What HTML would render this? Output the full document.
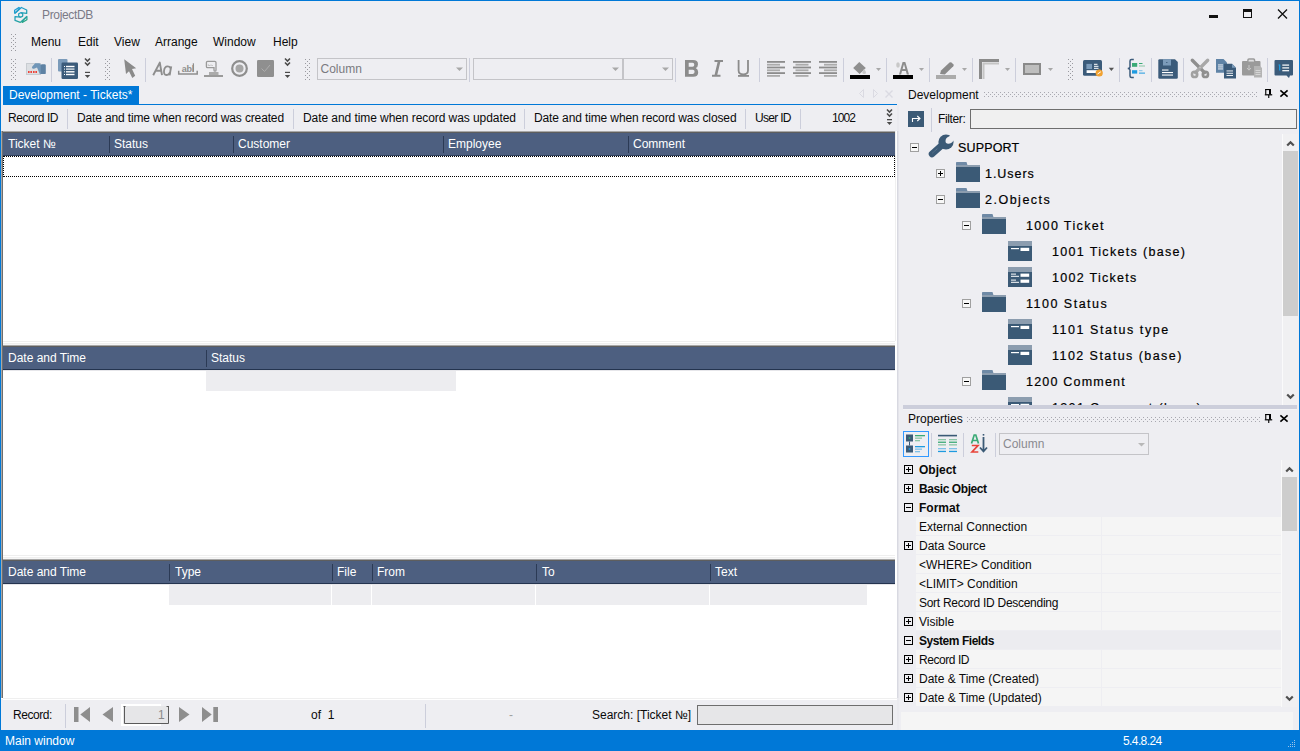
<!DOCTYPE html>
<html><head><meta charset="utf-8">
<style>
*{box-sizing:border-box;margin:0;padding:0}
html,body{width:1300px;height:751px;overflow:hidden;background:#EEEEF2;font-family:"Liberation Sans",sans-serif;font-size:12px;color:#0A0A0A}
.a{position:absolute}
.t{position:absolute;white-space:nowrap;line-height:14px}
.sep{position:absolute;width:1px;background:#CCCEDB}
.grip{position:absolute;width:5px;background-image:radial-gradient(circle,#A0A0A8 0.8px,transparent 1px);background-size:4px 4px}
.hdr{position:absolute;background:#4D5F80}
.hdr .t{color:#fff}
.hs{position:absolute;width:1px;background:#2B3A55}
.cell{position:absolute;background:#EDEDF0}
.pbox{position:absolute;width:9px;height:9px;border:1px solid #000;background:transparent}
.pbox:before{content:"";position:absolute;left:1px;top:3px;width:5px;height:1px;background:#000}
.pbox.plus:after{content:"";position:absolute;left:3px;top:1px;width:1px;height:5px;background:#000}
.tbox{position:absolute;width:9px;height:9px;border:1px solid #A0A0A0;background:#F5F5F5}
.tbox:before{content:"";position:absolute;left:1px;top:3px;width:5px;height:1px;background:#000}
.tbox.plus:after{content:"";position:absolute;left:3px;top:1px;width:1px;height:5px;background:#000}
.tree{position:absolute;white-space:nowrap;font-size:12.5px;line-height:14px;color:#000;-webkit-text-stroke:0.2px #000}
.prow{position:absolute;left:915px;width:367px;height:18px;background:#F5F5F5}
.prow2{position:absolute;left:1102px;width:180px;height:18px;background:#F5F5F5}
.arr{position:absolute;width:0;height:0;border-left:4px solid transparent;border-right:4px solid transparent;border-top:4px solid #A8A8A8}
</style></head><body>
<!-- window border -->
<div class="a" style="left:0;top:0;width:1300px;height:751px;border:1px solid #0078D7;"></div>

<!-- title bar -->
<!-- logo -->
<svg class="a" style="left:11px;top:4px" width="20" height="22" viewBox="11 4 20 22">
<defs><linearGradient id="lg" gradientUnits="userSpaceOnUse" x1="14" y1="7" x2="25" y2="24"><stop offset="0" stop-color="#1E9BE0"/><stop offset="0.5" stop-color="#22A0B8"/><stop offset="0.8" stop-color="#26A39A"/><stop offset="1" stop-color="#30A866"/></linearGradient></defs>
<g stroke="url(#lg)" stroke-width="1.25" fill="none" stroke-linejoin="round">
<path d="M14.6 13.2 V10.2 L18.9 7.4 L19.8 8.2 L14.8 13.2 Z"/>
<path d="M15 13.3 L21.4 7.5 L26.7 10 V13.4 L20.8 12.7"/>
<path d="M18.7 13.7 L20.7 12.7 L22.7 13.6 V16.1 L20.7 17.2 L18.7 16.2 Z"/>
<path d="M26.7 16.6 L20.3 22.4 L15 20.4 V16.6 L20.7 17.2"/>
<path d="M26.9 16.4 V19.8 L22.3 22.4 L21.7 21.8 Z"/>
</g></svg>

<div class="t" style="left:42px;top:8px;color:#7A7A86;font-size:12px;letter-spacing:-0.33px">ProjectDB</div>
<div class="a" style="left:1209px;top:15px;width:9px;height:3px;background:#111"></div>
<div class="a" style="left:1243px;top:9px;width:9px;height:9px;border:1px solid #111;border-top-width:3px"></div>
<svg class="a" style="left:1277px;top:9px" width="11" height="10" viewBox="0 0 11 10"><path d="M1 0.5L10 9.5M10 0.5L1 9.5" stroke="#111" stroke-width="1.3"/></svg>

<!-- menu bar -->
<div class="t" style="left:31px;top:35px">Menu</div>
<div class="t" style="left:78px;top:35px">Edit</div>
<div class="t" style="left:114px;top:35px">View</div>
<div class="t" style="left:155px;top:35px">Arrange</div>
<div class="t" style="left:213px;top:35px">Window</div>
<div class="t" style="left:273px;top:35px">Help</div>

<!-- toolbar placeholder -->
<svg class="a" style="left:0;top:0" width="1300" height="90" viewBox="0 0 1300 90" shape-rendering="auto">
<defs>
<pattern id="gp" x="0" y="0" width="4" height="4" patternUnits="userSpaceOnUse"><rect x="0" y="0" width="1" height="1" fill="#9A9AA0"/><rect x="2" y="2" width="1" height="1" fill="#9A9AA0"/></pattern>
<pattern id="dp" x="0" y="0" width="4" height="4" patternUnits="userSpaceOnUse"><rect x="0" y="0" width="1" height="1" fill="#A8A8B0"/><rect x="2" y="2" width="1" height="1" fill="#A8A8B0"/></pattern>
</defs>
<!-- grippers -->
<rect width="5" height="17" fill="url(#gp)" transform="translate(11,34)"/>
<rect width="5" height="21" fill="url(#gp)" transform="translate(11,59)"/>
<rect width="5" height="21" fill="url(#gp)" transform="translate(105,59)"/>
<rect width="5" height="21" fill="url(#gp)" transform="translate(305,59)"/>
<rect width="5" height="21" fill="url(#gp)" transform="translate(1068,59)"/>
<!-- separators -->
<g fill="#CCCEDB">
<rect x="51" y="58" width="1" height="24"/>
<rect x="145" y="58" width="1" height="24"/>
<rect x="469" y="58" width="1" height="24"/>
<rect x="675" y="58" width="1" height="24"/>
<rect x="759" y="58" width="1" height="24"/>
<rect x="843" y="58" width="1" height="24"/>
<rect x="886" y="58" width="1" height="24"/>
<rect x="929" y="58" width="1" height="24"/>
<rect x="972" y="58" width="1" height="24"/>
<rect x="1015" y="58" width="1" height="24"/>
<rect x="1119" y="58" width="1" height="24"/>
<rect x="1151" y="58" width="1" height="24"/>
<rect x="1183" y="58" width="1" height="24"/>
<rect x="1267" y="58" width="1" height="24"/>
</g>
<!-- icon: card with hand -->
<rect x="26.5" y="63.5" width="14" height="11" fill="#DCDFE3" stroke="#C8CCD1" stroke-width="1"/>
<g fill="#EE4238"><rect x="28" y="71" width="1.6" height="2"/><rect x="30.4" y="71" width="1.6" height="2"/><rect x="33" y="71" width="1.6" height="2"/><rect x="35.4" y="71" width="1.6" height="2"/></g>
<path d="M32.3 68.3 Q31.5 67.5 32.3 66.5 L35.2 63.2 H39.5 L41.5 65.5 V74 H39.8 L37 67.6 L34 68.8 Q33 69 32.3 68.3 Z" fill="#7096B8"/>
<rect x="40.8" y="64.3" width="5" height="9.8" rx="1.2" fill="#5E82A4"/>
<!-- icon: stacked docs -->
<rect x="58" y="59" width="9.5" height="12.5" rx="1" fill="#7B9BBA"/>
<rect x="61.5" y="62.5" width="16.5" height="16.5" rx="1.2" fill="#3B5B7A"/>
<g fill="#fff"><rect x="64" y="66" width="1" height="1"/><rect x="66" y="65.8" width="8.5" height="1.4"/>
<rect x="64" y="68.6" width="1" height="1"/><rect x="66" y="68.4" width="8.5" height="1.4" fill="#D8E0E8"/>
<rect x="64" y="71.3" width="1" height="1"/><rect x="66" y="71.1" width="8.5" height="1.4"/>
<rect x="64" y="74" width="1" height="1"/><rect x="66" y="73.8" width="8.5" height="1.4"/></g>
<!-- overflow chevrons -->
<g stroke="#4A4A4A" stroke-width="1.6" fill="none"><path d="M85 58.5 L87.5 61 L90 58.5"/><path d="M85 62.5 L87.5 65 L90 62.5"/></g>
<rect x="85" y="71.8" width="5" height="1.2" fill="#4A4A4A"/><path d="M84.8 75 L90.2 75 L87.5 78 Z" fill="#4A4A4A"/>
<g stroke="#4A4A4A" stroke-width="1.6" fill="none"><path d="M285 58.5 L287.5 61 L290 58.5"/><path d="M285 62.5 L287.5 65 L290 62.5"/></g>
<rect x="285" y="71.8" width="5" height="1.2" fill="#4A4A4A"/><path d="M284.8 75 L290.2 75 L287.5 78 Z" fill="#4A4A4A"/>
<!-- cursor -->
<path d="M124.2 59.2 L136.2 68.3 L132 68.9 L135.2 75.7 L132.3 78.1 L129 71.3 L126 73.9 Z" fill="#8A8A8A"/>
<!-- Aa -->
<path d="M153.2 75.2 L159.8 62.6 L162 75.2 M155.6 70.8 H161.2" stroke="#8E8E8E" stroke-width="1.9" fill="none" stroke-linejoin="round"/>
<path d="M171.2 66.3 L169.6 75.4" stroke="#8E8E8E" stroke-width="1.9" fill="none"/>
<path d="M170.6 68.2 Q169.5 66.3 167.6 66.3 Q164.4 66.3 164 71 Q163.8 75 166.3 75 Q168.6 75 170 72.3" stroke="#8E8E8E" stroke-width="1.8" fill="none"/>
<!-- abl -->
<text x="181.7" y="71.6" font-family="Liberation Sans" font-weight="bold" font-size="9" fill="#8E8E8E" letter-spacing="-0.2">abl</text>
<rect x="192.8" y="63.3" width="1.2" height="8.4" fill="#8E8E8E"/>
<path d="M178.7 70.7 V74 H197.2 V70.7" stroke="#8E8E8E" stroke-width="1.5" fill="none"/>
<!-- button icon -->
<path d="M207.6 67.6 Q206.4 67.6 206.4 66.4 V62.6 Q206.4 61.4 207.6 61.4 H214.8 Q216 61.4 216 62.6 V70.2 Q216 71.2 215 71.2 Q214 71.2 214 70.2 V67.6 Z" stroke="#9A9A9A" stroke-width="1.3" fill="none"/>
<path d="M208.3 64.3 V66 M209.6 65 V66 M211 64.5 V66 M212.3 65 V66" stroke="#B8B8B8" stroke-width="0.9"/>
<rect x="209" y="72" width="9.5" height="3" fill="#ABABAB"/>
<rect x="204" y="75" width="19" height="2" fill="#9A9A9A"/>
<!-- radio -->
<circle cx="239.5" cy="68.5" r="7.3" stroke="#8E8E8E" stroke-width="2.2" fill="none"/>
<circle cx="239.5" cy="68.5" r="4" fill="#A6A6A6"/>
<!-- checkbox -->
<rect x="257" y="60" width="17" height="17" rx="1.2" fill="#8F8F8F"/>
<path d="M261.5 68.5 L264.5 71.5 L270 65" stroke="#ADADAD" stroke-width="1" fill="none"/>
<!-- combos -->
<rect x="317.5" y="58.5" width="149" height="21" fill="#EEEEF2" stroke="#C4C4C8"/>
<path d="M456 67.5 H463 L459.5 71 Z" fill="#A8A8A8"/>
<rect x="473.5" y="58.5" width="149" height="21" fill="#EEEEF2" stroke="#C4C4C8"/>
<path d="M612 67.5 H619 L615.5 71 Z" fill="#A8A8A8"/>
<rect x="623.5" y="58.5" width="49" height="21" fill="#EEEEF2" stroke="#C4C4C8"/>
<path d="M662 67.5 H669 L665.5 71 Z" fill="#A8A8A8"/>
<text x="320.5" y="73" font-family="Liberation Sans" font-size="12" fill="#7A7A80">Column</text>
<!-- B I U -->
<path d="M685 60 H693 Q698 60 698 64.2 Q698 67 695.8 68 Q698.2 69.2 698.2 72.3 Q698.2 76.8 693.2 76.8 H685 Z M688.7 62.8 V66.8 H692.5 Q694.3 66.8 694.3 64.8 Q694.3 62.8 692.5 62.8 Z M688.7 69.8 V73.9 H692.8 Q694.6 73.9 694.6 71.85 Q694.6 69.8 692.8 69.8 Z" fill="#8C8C8C" fill-rule="evenodd"/>
<path d="M714.5 60 H723 V62 H720.3 L717.3 74.8 H720.5 V76.8 H712 V74.8 H714.6 L717.6 62 H714.5 Z" fill="#8C8C8C"/>
<path d="M738.6 60 V70.5 Q738.6 74.3 743.3 74.3 Q748 74.3 748 70.5 V60" stroke="#8C8C8C" stroke-width="1.8" fill="none"/>
<rect x="738" y="75" width="11" height="1.8" fill="#8C8C8C"/>
<!-- align -->
<g fill="#8C8C8C">
<rect x="767" y="61" width="18" height="1.8"/><rect x="767" y="66.6" width="18" height="1.8"/><rect x="767" y="72.2" width="18" height="1.8"/>
<rect x="793" y="61" width="18" height="1.8"/><rect x="793" y="66.6" width="18" height="1.8"/><rect x="793" y="72.2" width="18" height="1.8"/>
<rect x="819" y="61" width="18" height="1.8"/><rect x="819" y="66.6" width="18" height="1.8"/><rect x="819" y="72.2" width="18" height="1.8"/>
</g>
<g fill="#ABABAB">
<rect x="767" y="63.8" width="13" height="1.8"/><rect x="767" y="69.4" width="13" height="1.8"/><rect x="767" y="75" width="13" height="1.8"/>
<rect x="795.5" y="63.8" width="13" height="1.8"/><rect x="795.5" y="69.4" width="13" height="1.8"/><rect x="795.5" y="75" width="13" height="1.8"/>
<rect x="824" y="63.8" width="13" height="1.8"/><rect x="824" y="69.4" width="13" height="1.8"/><rect x="824" y="75" width="13" height="1.8"/>
</g>
<!-- fill color -->
<path d="M859.3 62 L865.8 68 L859.6 74 L853.2 68 Z" fill="#8F8F8F"/>
<path d="M864 69 Q866 71 866 72.5 Q866 74 864.2 74 Q862.4 74 862.4 72.5 Q862.4 71 864 69Z" fill="#C6C6C6"/>
<rect x="850" y="75" width="20" height="4" fill="#000"/>
<path d="M876 68 H881 L878.5 71 Z" fill="#A8A8A8"/>
<!-- font color -->
<path d="M899 74.4 L902.6 62 H905.3 L909 74.4 H906.8 L905.9 71 H902 L901.1 74.4 Z M902.6 69 H905.3 L904 64.3 Z" fill="#8C8C8C" fill-rule="evenodd"/>
<ellipse cx="898" cy="65" rx="1.8" ry="2.8" fill="#C8C8C8"/>
<rect x="893" y="75" width="20" height="4" fill="#000"/>
<path d="M919 68 H924 L921.5 71 Z" fill="#A8A8A8"/>
<!-- pencil -->
<path d="M940 74 L941 70.5 L949.5 62.5 Q950.5 61.8 951.5 62.5 L953.5 64.5 Q954 65.5 953.3 66.3 L944.8 74.5 Z" fill="#8A8A8A"/>
<rect x="936" y="75" width="20" height="4" fill="#ABABAB"/>
<path d="M962 68 H967 L964.5 71 Z" fill="#A8A8A8"/>
<!-- border corner -->
<path d="M980.5 79 V60.5 H999" stroke="#8A8A8A" stroke-width="3" fill="none"/>
<path d="M983.5 79 V63.5 H999" stroke="#C4C4C4" stroke-width="2" fill="none"/>
<path d="M1005 68 H1010 L1007.5 71 Z" fill="#A8A8A8"/>
<!-- rect -->
<rect x="1024" y="64" width="16" height="10" fill="#BEBEBE" stroke="#8A8A8A" stroke-width="2"/>
<path d="M1048 68 H1053 L1050.5 71 Z" fill="#A8A8A8"/>
<!-- card orange -->
<rect x="1083" y="60" width="19" height="15.7" rx="1.5" fill="#3B5B7A"/>
<rect x="1086.4" y="63.9" width="5.6" height="5.1" fill="#7B9BBA"/>
<g fill="#fff"><rect x="1094" y="63.8" width="3.5" height="1"/><rect x="1094" y="65.8" width="4.5" height="1"/><rect x="1094" y="67.8" width="4.5" height="1"/></g>
<rect x="1086.6" y="70.2" width="11" height="2.8" fill="#fff"/>
<circle cx="1099.2" cy="73" r="3.6" fill="#F2A230"/>
<path d="M1097.5 74 L1100.8 71.8" stroke="#fff" stroke-width="1"/>
<path d="M1108.8 67.7 H1114 L1111.4 71 Z" fill="#555"/>
<!-- braces -->
<path d="M1133.8 59.5 H1131.5 Q1130 59.5 1130 61 V67 Q1130 68.3 1127.8 68.5 Q1130 68.7 1130 70 V76 Q1130 77.5 1131.5 77.5 H1133.8" stroke="#3B5B7A" stroke-width="1.5" fill="none"/>
<rect x="1132" y="63" width="5.2" height="3.8" fill="#3BAA76"/>
<rect x="1139" y="63" width="3.5" height="1" fill="#3BAA76"/><rect x="1139" y="65.5" width="6" height="1" fill="#8CC5A6"/>
<rect x="1132" y="70.2" width="5.2" height="3.4" fill="#1E9BE0"/>
<rect x="1139" y="70.2" width="3.5" height="1" fill="#7FC0E6"/><rect x="1139" y="72.6" width="6" height="1" fill="#1E9BE0"/>
<!-- save -->
<path d="M1158.3 60.5 Q1158.3 59.2 1159.6 59.2 H1175 L1177.8 62 V77.4 Q1177.8 78.7 1176.5 78.7 H1159.6 Q1158.3 78.7 1158.3 77.4 Z" fill="#3B5B7A"/>
<rect x="1163" y="59.2" width="8" height="6.3" fill="#7B9BBA"/>
<rect x="1166" y="62" width="1.5" height="0.8" fill="#3B5B7A"/>
<g fill="#fff"><rect x="1162" y="69.5" width="6.5" height="1.1"/><rect x="1162" y="72" width="11" height="1.1"/><rect x="1162" y="74.5" width="11" height="1.1"/></g>
<!-- scissors -->
<path d="M1192.3 60.3 L1204.6 72.6" stroke="#8F8F8F" stroke-width="3.4" stroke-linecap="round"/>
<path d="M1207.7 60.3 L1195.4 72.6" stroke="#A8A8A8" stroke-width="3.4" stroke-linecap="round"/>
<circle cx="1194.6" cy="74.4" r="2.6" stroke="#A0A0A0" stroke-width="2.6" fill="none"/>
<circle cx="1205.4" cy="74.4" r="2.6" stroke="#8F8F8F" stroke-width="2.6" fill="none"/>
<circle cx="1200" cy="67.5" r="0.8" fill="#C8C8C8"/>
<!-- copy -->
<path d="M1216 59 H1223.5 L1227 62.5 V72.7 H1216 Z" fill="#5F83A6"/>
<g fill="#fff"><rect x="1218" y="64.5" width="5" height="0.9"/><rect x="1218" y="66.5" width="5" height="0.9"/><rect x="1218" y="68.5" width="5" height="0.9"/></g>
<path d="M1224 63.8 H1232 L1236 67.8 V78.5 H1224 Z" fill="#3B5B7A"/>
<path d="M1232 63.8 L1236 67.8 H1232 Z" fill="#7B9BBA"/>
<g fill="#fff"><rect x="1226.5" y="70.5" width="6.5" height="0.9"/><rect x="1226.5" y="72.8" width="6.5" height="0.9"/><rect x="1226.5" y="75" width="6.5" height="0.9"/></g>
<!-- paste -->
<rect x="1242" y="61" width="18.5" height="14.5" rx="1" fill="#9A9A9A"/>
<path d="M1248 61 V60 Q1248 59 1249 59 H1253.5 Q1254.5 59 1254.5 60 V61" stroke="#9A9A9A" stroke-width="1.6" fill="none"/>
<rect x="1248.5" y="60.5" width="5.5" height="1.2" fill="#D0D0D0"/>
<path d="M1249 65 V70 M1247 68 L1249 70.2 L1251 68" stroke="#C8C8C8" stroke-width="1" fill="none"/>
<path d="M1254 66 H1260 L1262 68 V77.6 H1254 Z" fill="#B4B4B4"/>
<g fill="#DADADA"><rect x="1255.5" y="70" width="5" height="0.9"/><rect x="1255.5" y="72" width="5" height="0.9"/><rect x="1255.5" y="74" width="5" height="0.9"/></g>
<!-- comment -->
<path d="M1274.5 61 Q1274.5 60 1275.5 60 H1292 Q1293 60 1293 61 V74.5 Q1293 75.5 1292 75.5 H1290 L1289 78 L1286.5 75.5 H1275.5 Q1274.5 75.5 1274.5 74.5 Z" fill="#3B5B7A"/>
<rect x="1279" y="64.5" width="1.3" height="6" fill="#1E9BE0"/><rect x="1278.5" y="64.5" width="1" height="1" fill="#1E9BE0"/>
<g fill="#fff"><rect x="1282.3" y="64.5" width="6.8" height="1.2"/><rect x="1282.3" y="67.3" width="6.8" height="1.2"/><rect x="1282.3" y="70.1" width="6.8" height="1.2"/></g>
</svg>


<!-- document tab -->
<div class="a" style="left:3px;top:86px;width:136px;height:19px;background:#0078D7"></div>
<div class="t" style="left:9px;top:88px;color:#fff">Development - Tickets*</div>
<div class="a" style="left:3px;top:104px;width:894px;height:1px;background:#0078D7"></div>

<!-- record bar -->
<div class="t" style="left:8px;top:111px;letter-spacing:-0.44px">Record ID</div>
<div class="sep" style="left:67px;top:109px;height:20px"></div>
<div class="t" style="left:77px;top:111px;letter-spacing:-0.14px">Date and time when record was created</div>
<div class="sep" style="left:293px;top:109px;height:20px"></div>
<div class="t" style="left:303px;top:111px;letter-spacing:-0.07px">Date and time when record was updated</div>
<div class="sep" style="left:524px;top:109px;height:20px"></div>
<div class="t" style="left:534px;top:111px;letter-spacing:-0.12px">Date and time when record was closed</div>
<div class="sep" style="left:745px;top:109px;height:20px"></div>
<div class="t" style="left:755px;top:111px;letter-spacing:-0.7px">User ID</div>
<div class="sep" style="left:800px;top:109px;height:20px"></div>
<div class="t" style="left:832px;top:111px;letter-spacing:-0.9px">1002</div>

<!-- doc white area -->
<div class="a" style="left:1px;top:131px;width:896px;height:568px;background:#fff"></div>
<div class="a" style="left:1px;top:131px;width:1px;height:567px;background:#A8A8A8"></div>
<div class="a" style="left:2px;top:131px;width:1px;height:567px;background:#6E6E6E"></div>
<!-- record bar chevron -->
<svg class="a" style="left:884px;top:106px" width="12" height="22" viewBox="0 0 12 22"><g stroke="#4A4A4A" stroke-width="1.6" fill="none"><path d="M3 3.5 L5.5 6 L8 3.5"/><path d="M3 7.5 L5.5 10 L8 7.5"/></g><rect x="3" y="13" width="5" height="1.3" fill="#4A4A4A"/><path d="M2.8 16 H8.2 L5.5 19 Z" fill="#4A4A4A"/></svg>
<!-- tab nav icons -->
<svg class="a" style="left:855px;top:86px" width="42" height="16" viewBox="0 0 42 16"><g stroke="#DADAE2" stroke-width="1" fill="none"><path d="M8.5 3.5 L4.5 7.5 L8.5 11.5 Z"/><path d="M18.5 3.5 L22.5 7.5 L18.5 11.5 Z"/><path d="M30.5 4.5 L37.5 11.5 M37.5 4.5 L30.5 11.5" stroke-width="1.4"/></g></svg>

<!-- GRID 1 -->
<div class="a" style="left:3px;top:131px;width:892px;height:1px;background:#A8A8A8"></div>
<div class="a" style="left:3px;top:132px;width:892px;height:1px;background:#5E5E5E"></div>
<div class="hdr" style="left:3px;top:133px;width:892px;height:23px"></div>
<div class="a" style="left:3px;top:155px;width:892px;height:1px;background:#31415D"></div>
<div class="hs" style="left:109px;top:136px;height:17px"></div>
<div class="hs" style="left:233px;top:136px;height:17px"></div>
<div class="hs" style="left:443px;top:136px;height:17px"></div>
<div class="hs" style="left:628px;top:136px;height:17px"></div>
<div class="t" style="left:8px;top:137px;color:#fff">Ticket №</div>
<div class="t" style="left:114px;top:137px;color:#fff">Status</div>
<div class="t" style="left:238px;top:137px;color:#fff">Customer</div>
<div class="t" style="left:448px;top:137px;color:#fff">Employee</div>
<div class="t" style="left:633px;top:137px;color:#fff">Comment</div>
<div class="a" style="left:3px;top:156px;width:892px;height:21px;border:1px dotted #000"></div>
<div class="a" style="left:895px;top:131px;width:1px;height:210px;background:#F0F0F0"></div>

<!-- GRID 2 -->
<div class="a" style="left:3px;top:341px;width:892px;height:1px;background:#EFEFEF"></div><div class="a" style="left:3px;top:343px;width:892px;height:1px;background:#EFEFEF"></div><div class="a" style="left:3px;top:344px;width:892px;height:1px;background:#F6F6F6"></div>
<div class="a" style="left:3px;top:345px;width:892px;height:1px;background:#A8A8A8"></div>
<div class="a" style="left:3px;top:346px;width:892px;height:1px;background:#5E5E5E"></div>
<div class="hdr" style="left:3px;top:347px;width:892px;height:22px"></div>
<div class="a" style="left:3px;top:370px;width:892px;height:1px;background:#E6E6EA"></div>
<div class="a" style="left:3px;top:369px;width:892px;height:1px;background:#24344F"></div>
<div class="hs" style="left:206px;top:350px;height:17px"></div>
<div class="t" style="left:8px;top:351px;color:#fff">Date and Time</div>
<div class="t" style="left:211px;top:351px;color:#fff">Status</div>
<div class="cell" style="left:206px;top:371px;width:250px;height:20px"></div>

<!-- GRID 3 -->
<div class="a" style="left:3px;top:555px;width:892px;height:1px;background:#EFEFEF"></div><div class="a" style="left:3px;top:557px;width:892px;height:1px;background:#EFEFEF"></div><div class="a" style="left:3px;top:558px;width:892px;height:1px;background:#F6F6F6"></div>
<div class="a" style="left:3px;top:559px;width:892px;height:1px;background:#A8A8A8"></div>
<div class="a" style="left:3px;top:560px;width:892px;height:1px;background:#5E5E5E"></div>
<div class="hdr" style="left:3px;top:561px;width:892px;height:22px"></div>
<div class="a" style="left:3px;top:584px;width:892px;height:1px;background:#E6E6EA"></div>
<div class="a" style="left:3px;top:583px;width:892px;height:1px;background:#24344F"></div>
<div class="hs" style="left:169px;top:564px;height:17px"></div>
<div class="hs" style="left:332px;top:564px;height:17px"></div>
<div class="hs" style="left:372px;top:564px;height:17px"></div>
<div class="hs" style="left:536px;top:564px;height:17px"></div>
<div class="hs" style="left:710px;top:564px;height:17px"></div>
<div class="t" style="left:8px;top:565px;color:#fff">Date and Time</div>
<div class="t" style="left:175px;top:565px;color:#fff">Type</div>
<div class="t" style="left:337px;top:565px;color:#fff">File</div>
<div class="t" style="left:377px;top:565px;color:#fff">From</div>
<div class="t" style="left:542px;top:565px;color:#fff">To</div>
<div class="t" style="left:715px;top:565px;color:#fff">Text</div>
<div class="cell" style="left:169px;top:585px;width:162px;height:20px"></div>
<div class="cell" style="left:332px;top:585px;width:39px;height:20px"></div>
<div class="cell" style="left:372px;top:585px;width:163px;height:20px"></div>
<div class="cell" style="left:536px;top:585px;width:173px;height:20px"></div>
<div class="cell" style="left:710px;top:585px;width:157px;height:20px"></div>

<!-- NAV BAR -->
<div class="a" style="left:3px;top:698px;width:894px;height:1px;background:#EFEFEF"></div>
<div class="a" style="left:3px;top:699px;width:894px;height:1px;background:#FFFFFF"></div>
<div class="t" style="left:13px;top:708px;letter-spacing:-0.43px">Record:</div>
<div class="sep" style="left:65px;top:704px;height:24px"></div>
<svg class="a" style="left:70px;top:704px" width="150" height="22" viewBox="70 704 150 22">
<rect x="74" y="707" width="4.5" height="15" fill="#8E8E8E"/><path d="M90 707 V722 L80.3 714.5 Z" fill="#8E8E8E"/>
<path d="M113 707 V722 L102.5 714.5 Z" fill="#8E8E8E"/>
<rect x="121" y="704" width="40" height="22" fill="#fff"/>
<rect x="123" y="706" width="46" height="18" fill="#E6E6E8"/><path d="M124.5 706 V723.5 H168.5 V706" stroke="#5A5A5A" stroke-width="1" fill="none"/><rect x="123.5" y="706" width="2" height="1" fill="#5A5A5A"/><rect x="166.5" y="706" width="2" height="1" fill="#5A5A5A"/>
<path d="M179 707 V722 L189.5 714.5 Z" fill="#8E8E8E"/>
<path d="M202 707 V722 L211.7 714.5 Z" fill="#8E8E8E"/><rect x="213.3" y="707" width="4.7" height="15" fill="#8E8E8E"/>
</svg>
<div class="t" style="left:158px;top:708px;color:#8A8A8A">1</div>
<div class="t" style="left:311px;top:708px">of&nbsp;&nbsp;1</div>
<div class="sep" style="left:425px;top:704px;height:24px"></div>
<div class="t" style="left:509px;top:708px;color:#A0A0A0">-</div>
<div class="t" style="left:592px;top:708px">Search: [Ticket №]</div>
<div class="a" style="left:697px;top:705px;width:196px;height:20px;background:#E6E6E8;border:1px solid #6E6E6E"></div>

<!-- STATUS BAR -->
<div class="a" style="left:0;top:730px;width:1300px;height:21px;background:#0078D7"></div>
<div class="t" style="left:5px;top:734px;color:#fff">Main window</div>
<div class="t" style="left:1123px;top:734px;color:#fff;letter-spacing:-0.6px">5.4.8.24</div>
<svg class="a" style="left:1286px;top:738px" width="12" height="12" viewBox="0 0 12 12"><g fill="#9CC3E8"><rect x="8" y="2" width="1" height="1"/><rect x="6" y="4" width="1" height="1"/><rect x="8" y="4" width="1" height="1"/><rect x="4" y="6" width="1" height="1"/><rect x="6" y="6" width="1" height="1"/><rect x="8" y="6" width="1" height="1"/><rect x="2" y="8" width="1" height="1"/><rect x="4" y="8" width="1" height="1"/><rect x="6" y="8" width="1" height="1"/><rect x="8" y="8" width="1" height="1"/></g></svg>

<!-- RIGHT PANEL: Development -->
<div class="a" style="left:897px;top:105px;width:2px;height:625px;background:#EAEAEF"></div>
<div class="a" style="left:897px;top:131px;width:1px;height:567px;background:#D8D9E1"></div>
<div class="a" style="left:898px;top:131px;width:1px;height:567px;background:#E4E4EA"></div>
<div class="t" style="left:908px;top:88px">Development</div>
<svg class="a" style="left:980px;top:86px" width="318" height="16" viewBox="980 86 318 16"><rect width="273" height="5" fill="url(#dp)" transform="translate(984,92)"/><rect x="1265.2" y="89" width="1.1" height="5.5" fill="#000"/><rect x="1265.2" y="89" width="5.8" height="1.1" fill="#000"/><rect x="1269" y="89" width="2" height="5.5" fill="#000"/><rect x="1264.8" y="94.2" width="7.4" height="1.2" fill="#000"/><rect x="1268.2" y="95" width="1.1" height="3" fill="#000"/><path d="M1280.4 90.3 L1287.6 96.7 M1287.6 90.3 L1280.4 96.7" stroke="#000" stroke-width="1.6"/></svg>
<svg class="a" style="left:906px;top:108px" width="20" height="22" viewBox="906 108 20 22"><rect x="908" y="111" width="16" height="16" fill="#3B5A76"/><path d="M912.5 122 V118.5 H919.5" stroke="#fff" stroke-width="1.1" fill="none"/><path d="M917.3 116 L920 118.5 L917.3 121" stroke="#fff" stroke-width="1.1" fill="none"/></svg>
<div class="sep" style="left:931px;top:108px;height:24px"></div>
<div class="t" style="left:938px;top:112px;letter-spacing:-0.36px">Filter:</div>
<div class="a" style="left:970px;top:109px;width:327px;height:20px;background:#F0F0F0;border:1px solid #6E6E6E"></div>
<svg class="a" style="left:900px;top:132px" width="383" height="273" viewBox="900 132 383 273">
<rect x="910.5" y="143.5" width="8" height="8" fill="#F7F7F7" stroke="#A0A0A0"/>
<rect x="912" y="147" width="5" height="1" fill="#000"/>
<path d="M932 154 L941.5 145.5" stroke="#3B5A76" stroke-width="6.5" stroke-linecap="round"/><circle cx="946" cy="142" r="7.6" fill="#3B5A76"/><path d="M945.5 141 Q945.5 137.5 949 136.5 L953 133 L956 133 L956 140 L953.5 140.5 Q951.5 143.8 948.3 143.8 Q945.5 143.8 945.5 141 Z" fill="#EEEEF2"/><path d="M932.5 153 L937.5 148.5" stroke="#7E97AE" stroke-width="0.6" stroke-dasharray="1 0.6"/>
<rect x="936.5" y="169.5" width="8" height="8" fill="#F7F7F7" stroke="#A0A0A0"/>
<rect x="938" y="173" width="5" height="1" fill="#000"/>
<rect x="940" y="171" width="1" height="5" fill="#000"/>
<g transform="translate(956,162)"><path d="M0 0.8 Q0 0 0.8 0 H10.5 L11.5 3.2 H24 V5 H0 Z" fill="#6F8AA6"/><rect x="0" y="3" width="24" height="2" fill="#8C9DAF"/><rect x="0" y="5" width="24" height="15" fill="#3B5A76"/></g>
<rect x="936.5" y="195.5" width="8" height="8" fill="#F7F7F7" stroke="#A0A0A0"/>
<rect x="938" y="199" width="5" height="1" fill="#000"/>
<g transform="translate(956,188)"><path d="M0 0.8 Q0 0 0.8 0 H10.5 L11.5 3.2 H24 V5 H0 Z" fill="#6F8AA6"/><rect x="0" y="3" width="24" height="2" fill="#8C9DAF"/><rect x="0" y="5" width="24" height="15" fill="#3B5A76"/></g>
<rect x="962.5" y="221.5" width="8" height="8" fill="#F7F7F7" stroke="#A0A0A0"/>
<rect x="964" y="225" width="5" height="1" fill="#000"/>
<g transform="translate(982,214)"><path d="M0 0.8 Q0 0 0.8 0 H10.5 L11.5 3.2 H24 V5 H0 Z" fill="#6F8AA6"/><rect x="0" y="3" width="24" height="2" fill="#8C9DAF"/><rect x="0" y="5" width="24" height="15" fill="#3B5A76"/></g>
<g transform="translate(1008,241)"><rect width="24" height="20" fill="#3B5A76"/><rect width="24" height="5" fill="#8C9DAF"/><rect x="3" y="7" width="8" height="1.2" fill="#fff"/><rect x="12.5" y="6.8" width="8.7" height="3.2" fill="#fff"/></g>
<g transform="translate(1008,267)"><rect width="24" height="20" fill="#3B5A76"/><rect width="24" height="5" fill="#8C9DAF"/><rect x="3" y="6.6" width="5" height="1" fill="#fff"/><rect x="3" y="8.8" width="8" height="1" fill="#fff"/><rect x="12.5" y="6.6" width="8.7" height="3.2" fill="#fff"/><rect x="3" y="12.6" width="5" height="1" fill="#fff"/><rect x="3" y="14.8" width="8" height="1" fill="#fff"/><rect x="12.5" y="12.6" width="8.7" height="3.2" fill="#fff"/></g>
<rect x="962.5" y="299.5" width="8" height="8" fill="#F7F7F7" stroke="#A0A0A0"/>
<rect x="964" y="303" width="5" height="1" fill="#000"/>
<g transform="translate(982,292)"><path d="M0 0.8 Q0 0 0.8 0 H10.5 L11.5 3.2 H24 V5 H0 Z" fill="#6F8AA6"/><rect x="0" y="3" width="24" height="2" fill="#8C9DAF"/><rect x="0" y="5" width="24" height="15" fill="#3B5A76"/></g>
<g transform="translate(1008,319)"><rect width="24" height="20" fill="#3B5A76"/><rect width="24" height="5" fill="#8C9DAF"/><rect x="3" y="7" width="8" height="1.2" fill="#fff"/><rect x="12.5" y="6.8" width="8.7" height="3.2" fill="#fff"/></g>
<g transform="translate(1008,345)"><rect width="24" height="20" fill="#3B5A76"/><rect width="24" height="5" fill="#8C9DAF"/><rect x="3" y="7" width="8" height="1.2" fill="#fff"/><rect x="12.5" y="6.8" width="8.7" height="3.2" fill="#fff"/></g>
<rect x="962.5" y="377.5" width="8" height="8" fill="#F7F7F7" stroke="#A0A0A0"/>
<rect x="964" y="381" width="5" height="1" fill="#000"/>
<g transform="translate(982,370)"><path d="M0 0.8 Q0 0 0.8 0 H10.5 L11.5 3.2 H24 V5 H0 Z" fill="#6F8AA6"/><rect x="0" y="3" width="24" height="2" fill="#8C9DAF"/><rect x="0" y="5" width="24" height="15" fill="#3B5A76"/></g>
<g transform="translate(1008,397)"><rect width="24" height="20" fill="#3B5A76"/><rect width="24" height="5" fill="#8C9DAF"/><rect x="3" y="7" width="8" height="1.2" fill="#fff"/><rect x="12.5" y="6.8" width="8.7" height="3.2" fill="#fff"/></g>
</svg>
<div class="a" style="left:900px;top:132px;width:383px;height:273px;overflow:hidden">
<div class="tree" style="left:58px;top:9px;letter-spacing:0.17px">SUPPORT</div>
<div class="tree" style="left:85px;top:35px;letter-spacing:0.95px">1.Users</div>
<div class="tree" style="left:85px;top:61px;letter-spacing:1.5px">2.Objects</div>
<div class="tree" style="left:126px;top:87px;letter-spacing:1.36px">1000 Ticket</div>
<div class="tree" style="left:152px;top:113px;letter-spacing:1.33px">1001 Tickets (base)</div>
<div class="tree" style="left:152px;top:139px;letter-spacing:1.28px">1002 Tickets</div>
<div class="tree" style="left:126px;top:165px;letter-spacing:1.5px">1100 Status</div>
<div class="tree" style="left:152px;top:191px;letter-spacing:1.55px">1101 Status type</div>
<div class="tree" style="left:152px;top:217px;letter-spacing:1.45px">1102 Status (base)</div>
<div class="tree" style="left:126px;top:243px;letter-spacing:1.2px">1200 Comment</div>
<div class="tree" style="left:152px;top:269px;letter-spacing:1.35px">1201 Comment (base)</div>
</div>
<div class="a" style="left:1282px;top:134px;width:1px;height:271px;background:#FAFAFB"></div>
<div class="a" style="left:1283px;top:134px;width:15px;height:271px;background:#F0F0F2"></div>
<div class="a" style="left:1283px;top:151px;width:15px;height:165px;background:#CDCDCD"></div>
<svg class="a" style="left:1283px;top:134px" width="15" height="271" viewBox="0 0 15 271"><path d="M4.2 11.5 L7.5 8.2 L10.8 11.5" stroke="#505050" stroke-width="2.2" fill="none"/><path d="M4.2 260.5 L7.5 263.8 L10.8 260.5" stroke="#505050" stroke-width="2.2" fill="none"/></svg>
<div class="a" style="left:903px;top:405px;width:394px;height:4px;background:#CCCEDB"></div>
<div class="a" style="left:903px;top:409px;width:394px;height:1px;background:#F4F4F6"></div>
<div class="t" style="left:908px;top:412px">Properties</div>
<svg class="a" style="left:960px;top:410px" width="338" height="16" viewBox="960 410 338 16"><rect width="293" height="5" fill="url(#dp)" transform="translate(967,417)"/><rect x="1265.2" y="414" width="1.1" height="5.5" fill="#000"/><rect x="1265.2" y="414" width="5.8" height="1.1" fill="#000"/><rect x="1269" y="414" width="2" height="5.5" fill="#000"/><rect x="1264.8" y="419.2" width="7.4" height="1.2" fill="#000"/><rect x="1268.2" y="420" width="1.1" height="3" fill="#000"/><path d="M1280.4 415.3 L1287.6 421.7 M1287.6 415.3 L1280.4 421.7" stroke="#000" stroke-width="1.6"/></svg>
<svg class="a" style="left:900px;top:428px" width="260" height="32" viewBox="900 428 260 32">
<rect x="903.5" y="431.5" width="25" height="25" fill="#EEEEF2" stroke="#3399FF"/>
<rect x="906" y="434.5" width="7" height="7" fill="#3B5A76"/><rect x="908.7" y="437.2" width="1.6" height="1.6" fill="#3BAA76"/>
<rect x="909" y="441.5" width="1" height="4" fill="#3B5A76"/>
<rect x="906" y="445.5" width="7" height="7" fill="#3B5A76"/><rect x="908.7" y="448.2" width="1.6" height="1.6" fill="#1E9BE0"/>
<rect x="915" y="435" width="10" height="1.3" fill="#3BAA76"/><rect x="915" y="437.5" width="7" height="1.3" fill="#8CC5A6"/><rect x="915" y="440" width="5" height="1.3" fill="#8CC5A6"/>
<rect x="915" y="446" width="10" height="1.3" fill="#1E9BE0"/><rect x="915" y="448.5" width="7" height="1.3" fill="#7FC0E6"/><rect x="915" y="451" width="5" height="1.3" fill="#7FC0E6"/>
<rect x="931" y="433" width="1" height="24" fill="#CCCEDB"/>
<rect x="938" y="434.8" width="19" height="1.6" fill="#3B5A76"/>
<g fill="#8CC5A6"><rect x="938" y="439" width="8" height="1.3"/><rect x="949" y="439" width="8" height="1.3"/></g>
<g fill="#3BAA76"><rect x="938" y="441.6" width="8" height="1.3"/><rect x="949" y="441.6" width="8" height="1.3"/></g>
<g fill="#8CC5A6"><rect x="938" y="444.2" width="8" height="1.3"/><rect x="949" y="444.2" width="8" height="1.3"/></g>
<g fill="#7FC0E6"><rect x="938" y="448" width="8" height="1.3"/><rect x="949" y="448" width="8" height="1.3"/></g>
<g fill="#1E9BE0"><rect x="938" y="450.8" width="8" height="1.3"/><rect x="949" y="450.8" width="8" height="1.3"/></g>
<rect x="963" y="433" width="1" height="24" fill="#CCCEDB"/>
<path d="M971.5 443.5 L974.2 435 H975.8 L978.5 443.5 M972.6 440.5 H977.4" stroke="#3BAA76" stroke-width="1.7" fill="none"/>
<path d="M971.8 445.5 H978 L972 452 H978.3" stroke="#E8443A" stroke-width="1.7" fill="none"/>
<path d="M983.5 437 V451 M980 447.5 L983.5 451.5 L987 447.5" stroke="#3B5A76" stroke-width="1.8" fill="none"/>
<rect x="982.7" y="434" width="1.6" height="1.6" fill="#3B5A76"/>
<rect x="995" y="433" width="1" height="24" fill="#CCCEDB"/>
<rect x="999.5" y="433.5" width="149" height="21" fill="#EEEEF2" stroke="#C4C4C8"/>
<path d="M1138 443 H1145 L1141.5 446.5 Z" fill="#B8B8B8"/>
</svg>
<div class="t" style="left:1003px;top:437px;color:#8A8A90">Column</div>
<div class="pbox plus" style="left:904px;top:465px"></div>
<div class="t" style="left:919px;top:463px;font-weight:bold;">Object</div>
<div class="pbox plus" style="left:904px;top:484px"></div>
<div class="t" style="left:919px;top:482px;font-weight:bold;letter-spacing:-0.42px">Basic Object</div>
<div class="pbox" style="left:904px;top:503px"></div>
<div class="t" style="left:919px;top:501px;font-weight:bold;">Format</div>
<div class="a" style="left:916px;top:517px;width:185px;height:18px;background:#F5F5F5"></div>
<div class="a" style="left:1102px;top:517px;width:179px;height:18px;background:#F5F5F5"></div>
<div class="t" style="left:919px;top:520px;">External Connection</div>
<div class="a" style="left:916px;top:536px;width:185px;height:18px;background:#F5F5F5"></div>
<div class="a" style="left:1102px;top:536px;width:179px;height:18px;background:#F5F5F5"></div>
<div class="pbox plus" style="left:904px;top:541px"></div>
<div class="t" style="left:919px;top:539px;">Data Source</div>
<div class="a" style="left:916px;top:555px;width:185px;height:18px;background:#F5F5F5"></div>
<div class="a" style="left:1102px;top:555px;width:179px;height:18px;background:#F5F5F5"></div>
<div class="t" style="left:919px;top:558px;">&lt;WHERE&gt; Condition</div>
<div class="a" style="left:916px;top:574px;width:185px;height:18px;background:#F5F5F5"></div>
<div class="a" style="left:1102px;top:574px;width:179px;height:18px;background:#F5F5F5"></div>
<div class="t" style="left:919px;top:577px;">&lt;LIMIT&gt; Condition</div>
<div class="a" style="left:916px;top:593px;width:185px;height:18px;background:#F5F5F5"></div>
<div class="a" style="left:1102px;top:593px;width:179px;height:18px;background:#F5F5F5"></div>
<div class="t" style="left:919px;top:596px;letter-spacing:-0.28px">Sort Record ID Descending</div>
<div class="a" style="left:916px;top:612px;width:185px;height:18px;background:#F5F5F5"></div>
<div class="a" style="left:1102px;top:612px;width:179px;height:18px;background:#F5F5F5"></div>
<div class="pbox plus" style="left:904px;top:617px"></div>
<div class="t" style="left:919px;top:615px;">Visible</div>
<div class="a" style="left:916px;top:631px;width:365px;height:18px;background:#ECECF0"></div>
<div class="pbox" style="left:904px;top:636px"></div>
<div class="t" style="left:919px;top:634px;font-weight:bold;letter-spacing:-0.45px">System Fields</div>
<div class="a" style="left:916px;top:650px;width:185px;height:18px;background:#F5F5F5"></div>
<div class="a" style="left:1102px;top:650px;width:179px;height:18px;background:#F5F5F5"></div>
<div class="pbox plus" style="left:904px;top:655px"></div>
<div class="t" style="left:919px;top:653px;letter-spacing:-0.44px">Record ID</div>
<div class="a" style="left:916px;top:669px;width:185px;height:18px;background:#F5F5F5"></div>
<div class="a" style="left:1102px;top:669px;width:179px;height:18px;background:#F5F5F5"></div>
<div class="pbox plus" style="left:904px;top:674px"></div>
<div class="t" style="left:919px;top:672px;">Date &amp; Time (Created)</div>
<div class="a" style="left:916px;top:688px;width:185px;height:18px;background:#F5F5F5"></div>
<div class="a" style="left:1102px;top:688px;width:179px;height:18px;background:#F5F5F5"></div>
<div class="pbox plus" style="left:904px;top:693px"></div>
<div class="t" style="left:919px;top:691px;">Date &amp; Time (Updated)</div>
<div class="a" style="left:1281px;top:460px;width:1px;height:247px;background:#FAFAFA"></div>
<div class="a" style="left:1282px;top:460px;width:15px;height:247px;background:#F0F0F2"></div>
<div class="a" style="left:1282px;top:477px;width:15px;height:54px;background:#CDCDCD"></div>
<svg class="a" style="left:1282px;top:460px" width="15" height="247" viewBox="0 0 15 247"><path d="M4.2 11.5 L7.5 8.2 L10.8 11.5" stroke="#505050" stroke-width="2.2" fill="none"/><path d="M4.2 236.5 L7.5 239.8 L10.8 236.5" stroke="#505050" stroke-width="2.2" fill="none"/></svg>
<div class="a" style="left:901px;top:712px;width:392px;height:18px;background:#F5F5F5"></div>
</body></html>
